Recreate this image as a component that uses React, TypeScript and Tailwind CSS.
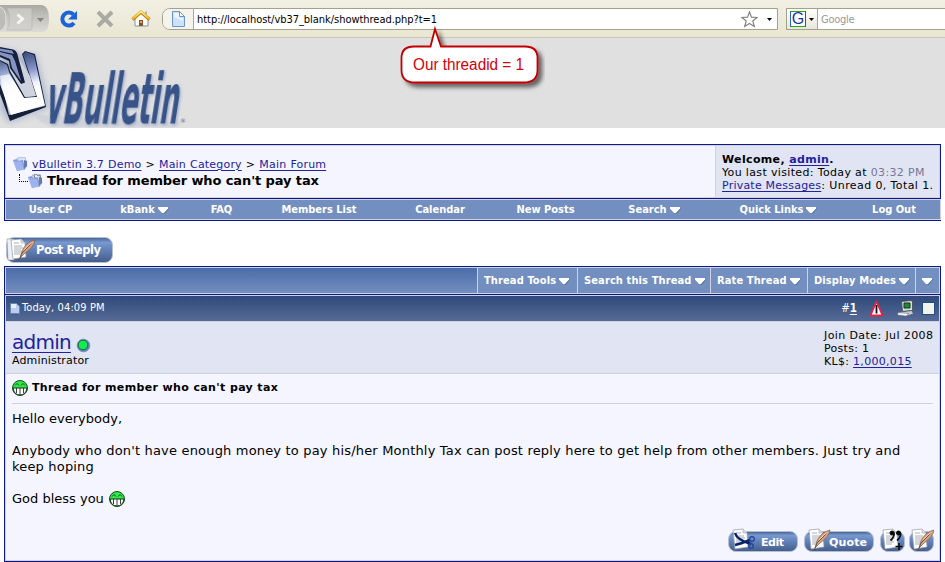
import type { ReactNode } from "react";

const verdana = "font-['DejaVu_Sans',sans-serif]";
const tahoma = "font-['DejaVu_Sans_Condensed','DejaVu_Sans',sans-serif]";

function Caret({ className = "" }: { className?: string }) {
  return (
    <svg width="11" height="7" viewBox="0 0 11 7" className={`shrink-0 ${className}`}>
      <path d="M2 1.5h9L6.5 7z" fill="#3d5c77" opacity=".7" />
      <path d="M0 0h10v1.5L6 6H4L0 1.5z" fill="#fff" />
    </svg>
  );
}

function TinyCaret() {
  return (
    <svg width="5" height="3" viewBox="0 0 5 3" className="shrink-0">
      <path d="M0 0h5L2.5 3z" fill="#000" />
    </svg>
  );
}

function Browser() {
  return (
    <div className="flex h-[38px] items-start border-b border-[#c9c8b8] bg-gradient-to-b from-[#f1f0e4] to-[#e9e6d2]">
      <svg width="160" height="37" viewBox="0 0 160 37" className="shrink-0">
        <defs>
          <linearGradient id="nav" x2="0" y2="1">
            <stop stopColor="#aaa9a4" />
            <stop offset=".45" stopColor="#c3c2be" />
            <stop offset="1" stopColor="#dddcd6" />
          </linearGradient>
          <linearGradient id="roof" x2="0" y2="1">
            <stop stopColor="#ffec8d" />
            <stop offset="1" stopColor="#f5b51c" />
          </linearGradient>
        </defs>
        <path d="M0 5h42q7 1 7 14t-7 13H0z" fill="url(#nav)" />
        <path d="M0 7q6 2 6 12T0 31" fill="#bdbcb8" stroke="#e3e2dc" />
        <path d="M7 8h23q2 0 2 2v18q0 2-2 2H7q5-11 0-22z" fill="#d0cfca" opacity=".75" stroke="#aaa" strokeWidth=".6" />
        <path d="M17.500 14.500l5 4.500-5 4.500" fill="none" stroke="#f5f5f3" strokeWidth="3" />
        <path d="M37 18h7l-3.500 4z" fill="#85857f" />
        <path d="M73.500 14.500A6.500 6.500 0 1 0 74 23" fill="none" stroke="#1a63db" strokeWidth="4" />
        <path d="M77 11v8.500h-9z" fill="#1a63db" />
        <path d="M98 12l14 14m0-14L98 26" stroke="#aaa9a3" strokeWidth="4" />
        <path d="M135 18v8h13v-8l-6.500-6z" fill="#fffdf4" stroke="#8393a3" />
        <path d="M145 11.500h2v4h-2z" fill="#aab5bd" />
        <path d="M132.500 19.500l8.500-7.500 8.500 7.500" fill="none" stroke="#b77b0d" strokeWidth="3.300" strokeLinejoin="round" />
        <path d="M132.500 19l8.500-7.500 8.500 7.500" fill="none" stroke="url(#roof)" strokeWidth="2.200" strokeLinejoin="round" />
        <path d="M139 20h4v6h-4z" fill="#87542d" />
        <path d="M140 21h2v2h-2z" fill="#e3a060" />
      </svg>
      <div className="mt-2 ml-[2px] flex h-[22px] w-[616px] shrink-0 items-center rounded-l-[8px] border border-[#a4a28f] bg-white">
        <div className="flex h-full w-[31px] items-center justify-center rounded-l-[7px] border-r border-[#aaa998] bg-[#f5f4ec]">
          <svg width="13" height="16" viewBox="0 0 13 16">
            <path d="M.5.5h7l5 5v10H.5z" fill="#cde0f9" stroke="#6e94ce" />
            <path d="M2 2h5v5h4v3L2 6z" fill="#edf5fe" />
            <path d="M7.500.5v5h5z" fill="#fff" stroke="#6e94ce" />
          </svg>
        </div>
        <span className={`mt-[2px] ml-[3px] text-[11px] tracking-[-0.04px] whitespace-nowrap ${tahoma}`}>http://localhost/vb37_blank/showthread.php?t=1</span>
        <svg width="17" height="17" viewBox="0 0 17 17" className="mr-[9px] ml-auto">
          <path d="M8.500 1l2 5.200 5.500.3-4.200 3.500 1.500 5.500-4.800-3-4.800 3 1.500-5.500L1 6.500l5.500-.3z" fill="#fff" stroke="#85857f" strokeWidth="1.200" />
        </svg>
        <div className="mr-[5px] flex"><TinyCaret /></div>
      </div>
      <div className="mt-2 ml-[8px] flex h-[22px] flex-1 items-center border border-r-0 border-[#a4a28f] bg-white">
        <div className="flex h-full w-[31px] items-center border-r border-[#aaa998] bg-gradient-to-b from-white to-[#e8e6da] pl-[3px]">
          <div className="mr-[3px] flex h-4 w-4 shrink-0 items-center justify-center border border-t-[#26a51d] border-r-[#d01818] border-b-[#26a51d] border-l-[#2467cf] bg-white font-['Liberation_Sans',sans-serif] text-[16px] leading-none text-[#1a389d]">G</div>
          <TinyCaret />
        </div>
        <span className={`mt-[2px] ml-[3px] text-[11px] tracking-[-0.25px] text-[#999] ${tahoma}`}>Google</span>
      </div>
    </div>
  );
}

function Logo() {
  return (
    <svg width="200" height="90" viewBox="0 38 200 90" className="block overflow-visible">
      <defs>
        <linearGradient id="steel" gradientUnits="userSpaceOnUse" x1="0" y1="60" x2="12" y2="95">
          <stop stopColor="#4b5b8c" />
          <stop offset=".35" stopColor="#93a2cd" />
          <stop offset=".7" stopColor="#e9edfa" />
          <stop offset="1" stopColor="#fff" />
        </linearGradient>
        <linearGradient id="blade" gradientUnits="userSpaceOnUse" x1="26" y1="52" x2="36" y2="90">
          <stop stopColor="#394a7b" />
          <stop offset=".45" stopColor="#8493c9" />
          <stop offset=".8" stopColor="#eef0fc" />
          <stop offset="1" stopColor="#fff" />
        </linearGradient>
        <filter id="blur" x="-20%" y="-20%" width="140%" height="140%"><feGaussianBlur stdDeviation="3" /></filter>
        <filter id="soft"><feGaussianBlur stdDeviation="1" /></filter>
        <filter id="textShade" x="-5%" y="-10%" width="115%" height="125%"><feDropShadow dx="1.5" dy=".8" stdDeviation=".8" floodColor="#7088ba" floodOpacity=".55" /></filter>
        <clipPath id="band"><rect x="0" y="38" width="200" height="90" /></clipPath>
      </defs>
      <g clipPath="url(#band)">
        <path d="M0 48l15 3 7 4 14-1 14 53-41 16-9-14z" fill="#7f93bf" opacity=".5" filter="url(#blur)" />
        <path d="M34 114q6 14 34 13h108l6-5-100-5z" fill="#c6cbd6" opacity=".6" filter="url(#soft)" />
        <path d="M0 60l8 4 2 7 15 26 11-1L22 54l3-3 10 3 11 53-36 14L0 94z" fill="#161f3a" />
        <path d="M0 61l7 4 2 7 15 26 13-1 8 8-34 10L0 84z" fill="url(#steel)" />
        <path d="M0 76l9 39 36-9-8-9-13 1L9 74z" fill="#fff" opacity=".7" />
        <path d="M23 54l3-2 8 3 11 51-8-9z" fill="url(#blade)" />
        <path d="M9.500 69L25 97l11-1-6-20-13-20-2-1 2 20z" fill="#ced3df" />
        <path d="M0 47l13 2.500q4 1 5 7l7 26-4 1.500-11-16-1-7-9-4z" fill="#17203a" />
        <path d="M0 48.500l12 2 2 3.500-14-3z" fill="#8191c2" />
        <path d="M0 55l10 4 2 9 9 13-6-20-3-6-12-3z" fill="#8594c2" />
      </g>
      <text transform="translate(44 123.500) skewX(-9) scale(1 1.700)" textLength="133" lengthAdjust="spacingAndGlyphs" fontFamily="'DejaVu Sans Condensed',sans-serif" fontWeight="bold" fontSize="41" fill="#385287" filter="url(#textShade)">vBulletin</text>
      <text x="180" y="123" fontSize="6" fontFamily="DejaVu Sans" fill="#536b9a">®</text>
    </svg>
  );
}

function Callout() {
  return (
    <svg width="150" height="70" viewBox="395 25 150 70" className="absolute top-[25px] left-[395px]">
      <defs><filter id="shade" x="-20%" y="-20%" width="150%" height="160%"><feDropShadow dx="4" dy="4" stdDeviation="2" floodColor="#000" floodOpacity=".55" /></filter></defs>
      <path d="M414 46.500h16.500L435 29l6 17.500h84q12.500 0 12.500 11.500v12q0 12.500-14 12.500H415q-13.500 0-13.500-12.500V58q0-11.500 12.500-11.500z" fill="#fff" stroke="#c20005" strokeWidth="1.800" filter="url(#shade)" />
      <text x="413" y="70" textLength="111" lengthAdjust="spacingAndGlyphs" fontFamily="Liberation Sans, sans-serif" fontSize="16" fill="#d20008">Our threadid = 1</text>
    </svg>
  );
}

function Folder({ papers = false }: { papers?: boolean }) {
  return (
    <svg width="15" height="14" viewBox="0 0 15 14" className="shrink-0">
      <path d="M4 1l8-1 2 9-3 4z" fill="#d7e4f5" stroke="#90a8cb" strokeWidth=".6" />
      {papers && <path d="M6 1l2-1 2 2 2-1 1 6-4 3z" fill="#eee" stroke="#64646b" strokeWidth=".8" />}
      <path d="M0 3l4-1 1 2 5-1 2 9-8 2z" fill="#829ade" />
      <path d="M0 4l9 1 2 8-7 1z" fill="#a7baf0" opacity=".75" />
      <path d="M11 12l3-3V4l-3-1z" fill="#6479b2" />
    </svg>
  );
}

const A = ({ children }: { children: ReactNode }) => (
  <span className="text-[#22229c] underline decoration-1 underline-offset-[2px]">{children}</span>
);

function NavItem({ label, width, menu = false }: { label: string; width: string; menu?: boolean }) {
  return (
    <div className={`flex items-center justify-center gap-[3px] pt-[2px] ${width}`}>
      {label}
      {menu && <Caret />}
    </div>
  );
}

function ForumHeader() {
  return (
    <div className={`mx-1 mt-4 h-[77px] border border-[#0b198c] bg-[#f5f5ff] ${verdana}`}>
      <div className="flex h-[53px] border border-[#d1d1e1]">
        <div className="flex-1 pt-[11px] pl-[7px]">
          <div className="flex h-[14px] items-center whitespace-nowrap text-[11px]">
            <Folder />
            <span className="mt-[2px] ml-1 tracking-[0.18px] [word-spacing:0.4px]"><A>vBulletin 3.7 Demo</A> &gt; <A>Main Category</A> &gt; <A>Main Forum</A></span>
          </div>
          <div className="flex h-[20px] items-center pl-[6px]">
            <div className="mb-[7px] h-[8px] w-[9px] border-b border-l border-dotted border-black" />
            <Folder papers />
            <span className="ml-[4px] text-[13px] font-bold tracking-[-0.11px] whitespace-nowrap">Thread for member who can't pay tax</span>
          </div>
        </div>
        <div className="w-[224px] border-l border-[#d1d1e1] bg-[#e1e4f2] pt-[7px] pl-[6px] text-[11px] leading-[13px] tracking-[0.35px] whitespace-nowrap">
          <div className="font-bold">Welcome, <A>admin</A>.</div>
          <div>You last visited: Today at <span className="text-[#777799]">03:32 PM</span></div>
          <div><span className="tracking-[0.22px]"><A>Private Messages</A></span><span className="tracking-[0.4px]">: Unread 0, Total 1.</span></div>
        </div>
      </div>
      <div className={`flex h-[22px] border-t border-[#0b198c] text-[11px] font-bold whitespace-nowrap text-white ${tahoma}`}>
        <div className="flex flex-1 border border-[#d1d1e1] bg-[#738fbf]">
          <NavItem label="User CP" width="w-[89px]" />
          <NavItem label="kBank" width="w-[99px]" menu />
          <NavItem label="FAQ" width="w-[55px]" />
          <NavItem label="Members List" width="w-[140px]" />
          <NavItem label="Calendar" width="w-[102px]" />
          <NavItem label="New Posts" width="w-[109px]" />
          <NavItem label="Search" width="w-[109px]" menu />
          <NavItem label="Quick Links" width="w-[139px]" menu />
          <NavItem label="Log Out" width="w-[92px]" />
        </div>
      </div>
    </div>
  );
}

function Paper() {
  return (
    <g>
      <path d="M1 2l10-1 4 4 1 14-13 2z" fill="#fff" stroke="#949ba8" strokeWidth=".7" />
      <path d="M4 5h5m-5 3h8m-8 2h9m-9 2h7m-7 2h8m-8 2h6" stroke="#a8adb7" />
      <path d="M11 1v4h4" fill="#ddd" stroke="#aaa" strokeWidth=".6" />
    </g>
  );
}

function Feather() {
  return (
    <g>
      <path d="M10 20l2-7Q16 4 25 2q-1 7-10 13z" fill="#d2a17f" stroke="#875e49" strokeWidth=".7" />
      <path d="M9 23l3-8L23 4" fill="none" stroke="#5c473d" strokeWidth=".8" />
      <path d="M14 12q5-6 9-8" fill="none" stroke="#f4ceb5" />
    </g>
  );
}

function ButtonFace({ width, height }: { width: number; height: number }) {
  return (
    <>
      <defs>
        <linearGradient id="face" x2="0" y2="1">
          <stop stopColor="#4a6496" />
          <stop offset=".2" stopColor="#7898d0" />
          <stop offset=".55" stopColor="#5f7db5" />
          <stop offset="1" stopColor="#455c87" />
        </linearGradient>
      </defs>
      <rect x=".5" y=".5" width={width - 1} height={height - 1} rx="7.500" fill="url(#face)" stroke="#b4bfd4" />
      <path d={`M8 1.500H${width - 8}`} stroke="#4f6b9c" />
    </>
  );
}

function Smile({ className = "" }: { className?: string }) {
  return (
    <svg width="16" height="16" viewBox="0 0 16 16" className={`shrink-0 ${className}`}>
      <circle cx="8" cy="8" r="7.500" fill="#33e64b" stroke="#145020" />
      <path d="M1 8h14q-1 7-7 7T1 8z" fill="#fff" stroke="#173319" />
      <path d="M4.500 8v5M8 8v7m3.500-7v5" stroke="#413d46" />
      <path d="M3 5.500l2-2 2 2m2 0l2-2 2 2" fill="none" stroke="#075d17" />
    </svg>
  );
}

function Tool({ label, width }: { label: string; width: string }) {
  return (
    <div className={`flex items-center border-l border-[#d1d1e1] bg-[#738fbf] pl-[6px] ${width}`}>
      {label && <span className="mt-[2px] mr-[3px] tracking-[0.12px]">{label}</span>}
      <Caret className="mt-px" />
    </div>
  );
}

export default function App() {
  return (
    <div className="relative h-[562px] w-[945px] overflow-hidden bg-white text-black">
      <Browser />
      <div className="h-[90px] bg-[#e0e0e0]"><Logo /></div>
      <ForumHeader />
      <div className="h-[45px] pt-[16px] pl-[6px]">
        <svg width="107" height="27" viewBox="0 0 107 27">
          <ButtonFace width={107} height={26} />
          <g transform="translate(0 1)"><path d="M1 1h7v21H2z" fill="#eef0f3" stroke="#8d96a5" strokeWidth=".6" /><g transform="translate(4 0)"><Paper /></g><g transform="translate(4 0)"><Feather /></g></g>
          <text x="30" y="17" textLength="65" fontFamily="DejaVu Sans" fontSize="11.500" fontWeight="bold" fill="#fff">Post Reply</text>
        </svg>
      </div>
      <div className={`mx-1 flex h-[28px] border border-b-0 border-[#0b198c] text-[11px] font-bold whitespace-nowrap text-white ${tahoma}`}>
        <div className="flex flex-1 border border-[#d1d1e1] bg-gradient-to-b from-[#4b6ca9] to-[#738fbf]">
          <div className="flex-1" />
          <Tool label="Thread Tools" width="w-[100px]" />
          <Tool label="Search this Thread" width="w-[133px]" />
          <Tool label="Rate Thread" width="w-[97px]" />
          <Tool label="Display Modes" width="w-[108px]" />
          <Tool label="" width="w-[24px]" />
        </div>
      </div>
      <div className={`mx-1 h-[268px] border border-[#0b198c] ${verdana}`}>
        <div className="flex h-full flex-col border border-[#d1d1e1] bg-[#f5f5ff]">
          <div className={`flex h-[25px] shrink-0 items-center bg-gradient-to-b from-[#304a7b] to-[#566a96] pl-[4px] text-[11px] text-white ${tahoma}`}>
            <svg width="10" height="11" viewBox="0 0 10 11" className="mr-[2px] shrink-0">
              <path d="M.5.5h6l3 3v7h-9z" fill="#b9cdf0" stroke="#6984af" />
              <path d="M1 1h5v4H1z" fill="#e6eefb" />
            </svg>
            <span className="tracking-[0.12px] whitespace-nowrap">Today, 04:09 PM</span>
            <span className="mr-[12px] ml-auto text-[11.500px]">#<b className="underline underline-offset-[2px]">1</b></span>
            <svg width="15" height="17" viewBox="0 0 15 17" className="mr-[13px]">
              <path d="M7.500 1.500L13.500 15.500h-12z" fill="#fff" stroke="#e9224a" strokeWidth="1.800" strokeLinejoin="round" />
              <path d="M7.500 5v8.500" stroke="#111" strokeWidth="1.800" />
            </svg>
            <svg width="18" height="17" viewBox="0 0 18 17" className="mr-[7px]">
              <path d="M4.500 1.500L14 .5l1.500 1v9l-10 1z" fill="#d7dbda" stroke="#3f4855" strokeWidth=".8" />
              <path d="M7 3h6v5H7z" fill="#238537" stroke="#153919" />
              <path d="M3 12l12-1.500 1.500 3.500-8 2.500-6-2z" fill="#c3cbd4" stroke="#495669" strokeWidth=".8" />
              <path d="M1 12.500l11 1-3 2.500-8.500-1z" fill="#f4f6fa" stroke="#596679" strokeWidth=".5" />
            </svg>
            <div className="mr-[4px] h-[13px] w-[13px] border border-[#1c5180] bg-[#f2f2ef]" />
          </div>
          <div className="flex h-[53px] shrink-0 justify-between border-y border-[#d1d1e1] bg-[#e1e4f2]">
            <div className="pt-[8px] pl-[6px]">
              <div className="flex h-[24px] items-center">
                <span className="text-[20px] tracking-[-0.75px] text-[#22229c] underline decoration-1 underline-offset-[3px]">admin</span>
                <svg width="15" height="15" viewBox="0 0 15 15" className="mt-[7px] ml-[5px]">
                  <circle cx="7.500" cy="7.500" r="6.300" fill="#617fc3" stroke="#8191b5" />
                  <circle cx="7" cy="7" r="4.800" fill="#10ed50" stroke="#176a43" />
                </svg>
              </div>
              <div className="text-[11px] leading-[13px] tracking-[0.15px]">Administrator</div>
            </div>
            <div className="w-[115px] pt-[7px] text-[11px] leading-[13px] tracking-[0.3px] whitespace-nowrap">
              <div className="tracking-[0.4px]">Join Date: Jul 2008</div>
              <div>Posts: 1</div>
              <div>KL$: <A>1,000,015</A></div>
            </div>
          </div>
          <div className="px-[6px] pt-[5px]">
            <div className="flex h-[25px] items-start border-b border-[#d1d1e1] pt-px text-[11px] leading-[15px] font-bold tracking-[0.37px]"><Smile className="mr-1" />Thread for member who can't pay tax</div>
            <div className="pt-[7px] text-[13px] leading-4">
              <p>Hello everybody,</p>
              <p className="mt-4 tracking-[0.18px]">Anybody who don't have enough money to pay his/her Monthly Tax can post reply here to get help from other members. Just try and keep hoping</p>
              <p className="mt-4 flex">God bless you <Smile className="ml-[5px]" /></p>
            </div>
          </div>
          <div className="mt-auto mb-[7px] flex justify-end gap-[6px] pr-[5px]">
            <svg width="70" height="25" viewBox="0 0 70 25">
              <g transform="translate(0 3)"><ButtonFace width={70} height={21} /></g>
              <g transform="translate(4 0)"><Paper /></g>
              <path d="M7 5q2 7 16 11M7 17q5-1 15-5" fill="none" stroke="#0b2269" strokeWidth="2.500" />
              <circle cx="24" cy="11" r="2.300" fill="none" stroke="#24449e" strokeWidth="1.300" /><circle cx="23" cy="18" r="2.300" fill="none" stroke="#24449e" strokeWidth="1.300" />
              <text x="33" y="18" textLength="23" fontFamily="DejaVu Sans" fontSize="11" fontWeight="bold" fill="#fff">Edit</text>
            </svg>
            <svg width="70" height="25" viewBox="0 0 70 25">
              <g transform="translate(0 3)"><ButtonFace width={70} height={21} /></g>
              <g transform="translate(4 0)"><Paper /></g><g transform="translate(1 0)"><Feather /></g>
              <text x="25" y="18" textLength="38" fontFamily="DejaVu Sans" fontSize="11" fontWeight="bold" fill="#fff">Quote</text>
            </svg>
            <svg width="25" height="25" viewBox="0 0 25 25">
              <g transform="translate(0 3)"><ButtonFace width={25} height={21} /></g>
              <g transform="translate(2 0)"><Paper /></g>
              <g fill="none" stroke="#080808">
                <circle cx="12" cy="5" r="2" fill="#080808" /><path d="M13.500 4q2 4-3 8.500" strokeWidth="1.700" />
                <circle cx="18.500" cy="5" r="2" fill="#080808" /><path d="M20 4q2 4-3 8.500" strokeWidth="1.700" />
                <path d="M19 15v7m-3.500-3.500h7" strokeWidth="1.600" />
              </g>
            </svg>
            <svg width="25" height="25" viewBox="0 0 25 25" className="-ml-[2px]">
              <g transform="translate(0 3)"><ButtonFace width={25} height={21} /></g>
              <g transform="translate(2 0)"><Paper /></g><Feather />
            </svg>
          </div>
        </div>
      </div>
      <Callout />
    </div>
  );
}
